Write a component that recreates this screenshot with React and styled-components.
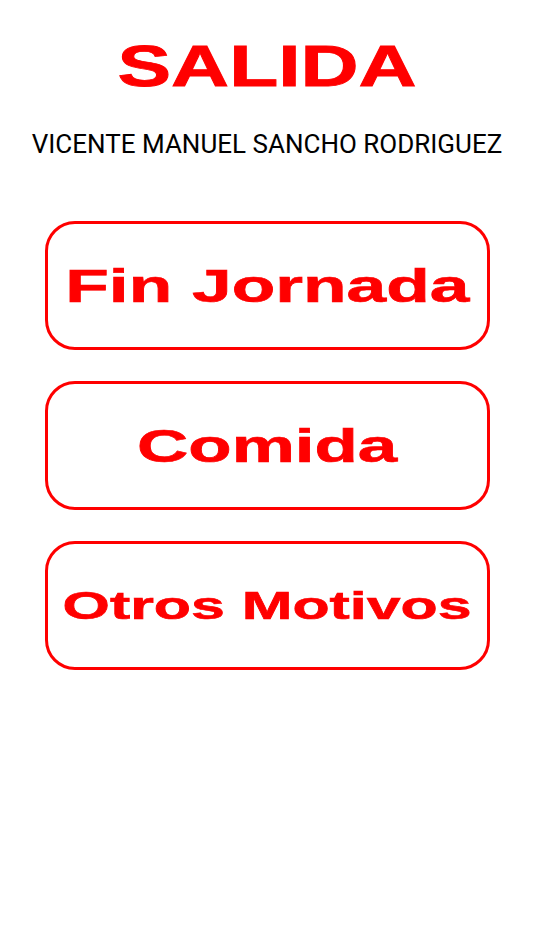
import React from "react";
import styled, { createGlobalStyle } from "styled-components";

const Global = createGlobalStyle`
  html, body { margin: 0; padding: 0; background: #ffffff; }
  body { width: 534px; height: 950px; overflow: hidden; }
`;

const Page = styled.div`
  display: flex;
  flex-direction: column;
  align-items: center;
  padding-top: 38px;
  width: 534px;
  height: 950px;
  box-sizing: border-box;
  background: #fff;
`;

const Title = styled.h1`
  margin: 0;
  height: 57px;
  font-family: "Liberation Sans", Arial, sans-serif;
  font-weight: 700;
  font-size: 57px;
  line-height: 57px;
  color: #ff0000;
  -webkit-text-stroke: 0.8px #ff0000;
  display: flex;
  justify-content: center;
  width: 100%;
`;

const Stretch = styled.span`
  display: inline-block;
  transform: scaleX(${(p) => p.$sx});
  transform-origin: center;
  white-space: nowrap;
`;

const Name = styled.div`
  margin-top: 36px;
  font-family: Roboto, "Liberation Sans", sans-serif;
  font-size: 26px;
  line-height: 26px;
  color: #000;
  white-space: nowrap;
`;

const Buttons = styled.div`
  margin-top: 64px;
  display: flex;
  flex-direction: column;
  gap: 31px;
`;

const Button = styled.button`
  width: 445px;
  height: 129px;
  box-sizing: border-box;
  border: 3px solid #ff0000;
  border-radius: 30px;
  background: #fff;
  display: flex;
  align-items: center;
  justify-content: center;
  padding: 0;
  cursor: pointer;
  font-family: "Liberation Sans", Arial, sans-serif;
  font-weight: 700;
  font-size: ${(p) => p.$fs}px;
  line-height: 1;
  color: #ff0000;
  -webkit-text-stroke: 0.6px #ff0000;
`;

export default function App() {
  return (
    <>
      <Global />
      <Page>
        <Title>
          <Stretch $sx={1.41}>SALIDA</Stretch>
        </Title>
        <Name>VICENTE MANUEL SANCHO RODRIGUEZ</Name>
        <Buttons>
          <Button $fs={46}>
            <Stretch $sx={1.55}>Fin Jornada</Stretch>
          </Button>
          <Button $fs={47}>
            <Stretch $sx={1.51}>Comida</Stretch>
          </Button>
          <Button $fs={39}>
            <Stretch $sx={1.56}>Otros Motivos</Stretch>
          </Button>
        </Buttons>
      </Page>
    </>
  );
}
